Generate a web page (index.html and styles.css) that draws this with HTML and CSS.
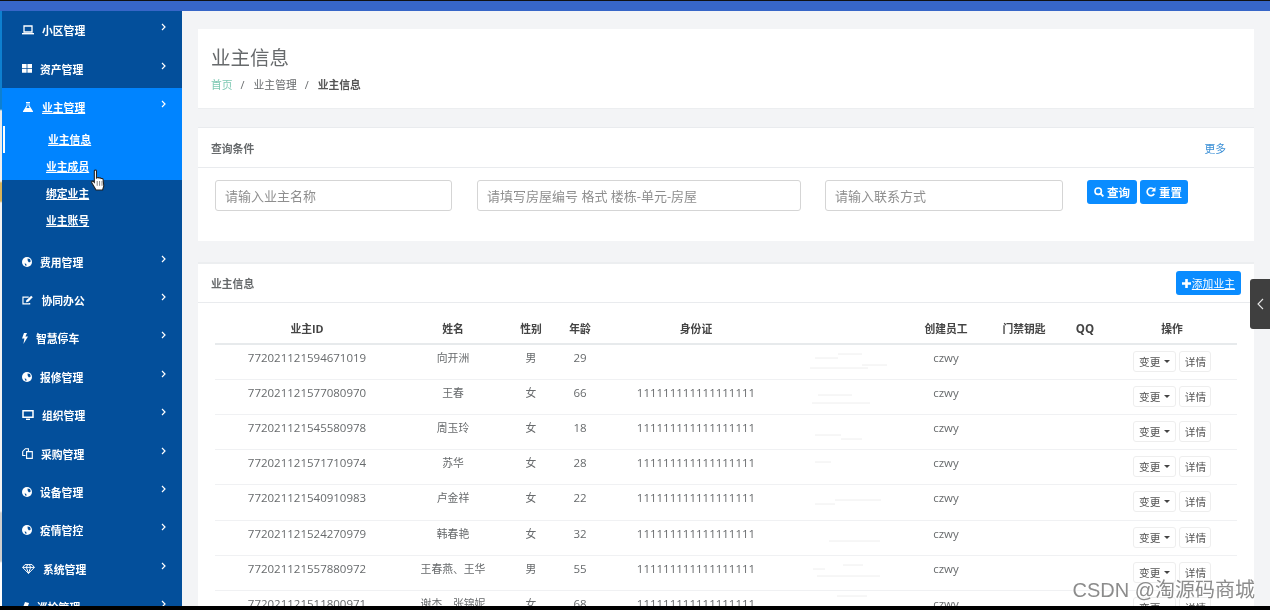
FILE: index.html
```html
<!DOCTYPE html>
<html lang="zh-CN">
<head>
<meta charset="utf-8">
<title>业主信息</title>
<link rel="stylesheet" href="styles.css">
</head>
<body>
<div class="page">
  <div class="topbar"></div>
  <div class="shell">
    <div class="edge"></div>
    <nav class="sidebar">
      <a class="item"><svg class="ic" width="12" height="10" viewBox="0 0 12 10"><path d="M2 1h8v6H2z" fill="none" stroke="#fff" stroke-width="1.3"/><path d="M0 8h12v1.4H0z" fill="#fff"/></svg><span>小区管理</span><svg class="chev" width="5" height="8" viewBox="0 0 5 8"><path d="M1 1l3 3-3 3" fill="none" stroke="#fff" stroke-width="1.2"/></svg></a>
      <a class="item"><svg class="ic" width="10" height="9" viewBox="0 0 10 9"><path d="M0 0h4.6v4H0zM5.4 0H10v4H5.4zM0 4.8h4.6v4H0zM5.4 4.8H10v4H5.4z" fill="#fff"/></svg><span>资产管理</span><svg class="chev" width="5" height="8" viewBox="0 0 5 8"><path d="M1 1l3 3-3 3" fill="none" stroke="#fff" stroke-width="1.2"/></svg></a>
      <div class="active">
        <a class="item under"><svg class="ic" width="12" height="10" viewBox="0 0 12 10"><path d="M4 0h4v1H7.4v2.6L11 9.2c.2.4 0 .8-.5.8h-9c-.5 0-.7-.4-.5-.8l3.6-5.6V1H4z" fill="#fff"/><path d="M5.5 1h1v3l1.2 2H4.3l1.2-2z" fill="#0084ff"/></svg><span>业主管理</span><svg class="chev" width="5" height="8" viewBox="0 0 5 8"><path d="M1 1l3 3-3 3" fill="none" stroke="#fff" stroke-width="1.2"/></svg></a>
        <a class="sub current">业主信息</a>
        <a class="sub">业主成员</a>
      </div>
      <div class="subrest">
        <a class="sub">绑定业主</a>
        <a class="sub">业主账号</a>
      </div>
      <a class="item"><svg class="ic" width="10" height="10" viewBox="0 0 10 10"><circle cx="5" cy="5" r="5" fill="#fff"/><path d="M5.5 1.5l2.5.6.8 2.4-1.8 1-1.2-1.5zM2.5 6.5l1.6.2.6 1.8-1.2.2z" fill="#034f9b"/></svg><span>费用管理</span><svg class="chev" width="5" height="8" viewBox="0 0 5 8"><path d="M1 1l3 3-3 3" fill="none" stroke="#fff" stroke-width="1.2"/></svg></a>
      <a class="item"><svg class="ic" width="11.5" height="10" viewBox="0 0 12 10"><path d="M8 8v1H1V2h6" fill="none" stroke="#fff" stroke-width="1.2"/><path d="M4.5 5.2L9.6.6l1.6 1.6-4.6 4.7-2.4.5z" fill="#fff"/></svg><span>协同办公</span><svg class="chev" width="5" height="8" viewBox="0 0 5 8"><path d="M1 1l3 3-3 3" fill="none" stroke="#fff" stroke-width="1.2"/></svg></a>
      <a class="item"><svg class="ic" width="6" height="11" viewBox="0 0 6 11"><path d="M2 0h3L3.4 3.6H6L1.4 11l1-5.4H0z" fill="#fff"/></svg><span>智慧停车</span><svg class="chev" width="5" height="8" viewBox="0 0 5 8"><path d="M1 1l3 3-3 3" fill="none" stroke="#fff" stroke-width="1.2"/></svg></a>
      <a class="item"><svg class="ic" width="10" height="10" viewBox="0 0 10 10"><circle cx="5" cy="5" r="5" fill="#fff"/><path d="M5.5 1.5l2.5.6.8 2.4-1.8 1-1.2-1.5zM2.5 6.5l1.6.2.6 1.8-1.2.2z" fill="#034f9b"/></svg><span>报修管理</span><svg class="chev" width="5" height="8" viewBox="0 0 5 8"><path d="M1 1l3 3-3 3" fill="none" stroke="#fff" stroke-width="1.2"/></svg></a>
      <a class="item"><svg class="ic" width="12" height="10" viewBox="0 0 12 10"><path d="M1 .8h10v6.4H1z" fill="none" stroke="#fff" stroke-width="1.5"/><path d="M4 8.6h4V10H4z" fill="#fff"/></svg><span>组织管理</span><svg class="chev" width="5" height="8" viewBox="0 0 5 8"><path d="M1 1l3 3-3 3" fill="none" stroke="#fff" stroke-width="1.2"/></svg></a>
      <a class="item"><svg class="ic" width="11" height="11" viewBox="0 0 11 11"><path d="M3.5 7.5H.7V3.4L3.4.7h3v2.5" fill="none" stroke="#fff" stroke-width="1.1"/><path d="M4.6 3.6h5.7v6.8H4.6z" fill="none" stroke="#fff" stroke-width="1.1"/></svg><span>采购管理</span><svg class="chev" width="5" height="8" viewBox="0 0 5 8"><path d="M1 1l3 3-3 3" fill="none" stroke="#fff" stroke-width="1.2"/></svg></a>
      <a class="item"><svg class="ic" width="10" height="10" viewBox="0 0 10 10"><circle cx="5" cy="5" r="5" fill="#fff"/><path d="M5.5 1.5l2.5.6.8 2.4-1.8 1-1.2-1.5zM2.5 6.5l1.6.2.6 1.8-1.2.2z" fill="#034f9b"/></svg><span>设备管理</span><svg class="chev" width="5" height="8" viewBox="0 0 5 8"><path d="M1 1l3 3-3 3" fill="none" stroke="#fff" stroke-width="1.2"/></svg></a>
      <a class="item"><svg class="ic" width="10" height="10" viewBox="0 0 10 10"><circle cx="5" cy="5" r="5" fill="#fff"/><path d="M5.5 1.5l2.5.6.8 2.4-1.8 1-1.2-1.5zM2.5 6.5l1.6.2.6 1.8-1.2.2z" fill="#034f9b"/></svg><span>疫情管控</span><svg class="chev" width="5" height="8" viewBox="0 0 5 8"><path d="M1 1l3 3-3 3" fill="none" stroke="#fff" stroke-width="1.2"/></svg></a>
      <a class="item"><svg class="ic" width="13" height="10" viewBox="0 0 13 10"><path d="M3 .6h7l2.4 2.8-5.9 6-5.9-6zM.8 3.4h11.4M4.4 3.4l2.1 6 2.1-6M4.4 3.4L5.6.6M8.6 3.4L7.4.6" fill="none" stroke="#fff" stroke-width="1"/></svg><span>系统管理</span><svg class="chev" width="5" height="8" viewBox="0 0 5 8"><path d="M1 1l3 3-3 3" fill="none" stroke="#fff" stroke-width="1.2"/></svg></a>
      <a class="item"><svg class="ic" width="7" height="10" viewBox="0 0 7 10"><path d="M3 0l4 1-3 9-4-2z" fill="#fff"/></svg><span>巡检管理</span><svg class="chev" width="5" height="8" viewBox="0 0 5 8"><path d="M1 1l3 3-3 3" fill="none" stroke="#fff" stroke-width="1.2"/></svg></a>
    </nav>
    <main class="main">
      <section class="card heading">
        <h2 class="title">业主信息</h2>
        <div class="crumbs"><span class="home">首页</span><i>/</i><span>业主管理</span><i>/</i><b>业主信息</b></div>
      </section>
      <section class="card query">
        <header class="card-head"><span class="head-title">查询条件</span><span class="more">更多</span></header>
        <div class="filters">
          <input class="field f1" placeholder="请输入业主名称">
          <input class="field f2" placeholder="请填写房屋编号 格式 楼栋-单元-房屋">
          <input class="field f3" placeholder="请输入联系方式">
          <div class="btns">
            <button class="btn"><svg width="10" height="10" viewBox="0 0 10 10"><circle cx="4.2" cy="4.2" r="3.2" fill="none" stroke="#fff" stroke-width="1.6"/><path d="M6.6 6.6L9.4 9.4" stroke="#fff" stroke-width="1.9"/></svg>查询</button>
            <button class="btn"><svg width="10" height="10" viewBox="0 0 10 10"><path d="M8.2 6.8A3.8 3.8 0 1 1 7.8 2.3" fill="none" stroke="#fff" stroke-width="1.7"/><path d="M9.5 0v4.4H5.2z" fill="#fff"/></svg>重置</button>
          </div>
        </div>
      </section>
      <section class="card list">
        <header class="card-head"><span class="head-title">业主信息</span><button class="btn add"><svg width="9" height="9" viewBox="0 0 9 9"><path d="M3.2 0h2.6v3.2H9v2.6H5.8V9H3.2V5.8H0V3.2h3.2z" fill="#fff"/></svg><span>添加业主</span></button></header>
        <table class="table">
          <thead>
            <tr><th class="c1">业主ID</th><th class="c2">姓名</th><th class="c3">性别</th><th class="c4">年龄</th><th class="c5">身份证</th><th class="c6"></th><th class="c7">创建员工</th><th class="c8">门禁钥匙</th><th class="c9">QQ</th><th class="c10">操作</th></tr>
          </thead>
          <tbody>
            <tr><td class="num">772021121594671019</td><td>向开洲</td><td>男</td><td class="num">29</td><td class="num"></td><td class="smudge"><svg width="123" height="34" viewBox="0 0 123 34"><path d="M51 9h24M28 13h23M75 20h25M23 23h58"/></svg></td><td class="num">czwy</td><td></td><td></td><td class="ops"><div class="ops-in"><button class="mini">变更<i class="caret"></i></button><button class="mini">详情</button></div></td></tr>
            <tr><td class="num">772021121577080970</td><td>王春</td><td>女</td><td class="num">66</td><td class="num">111111111111111111</td><td class="smudge"><svg width="123" height="34" viewBox="0 0 123 34"><path d="M31 15h34M25 23h58"/></svg></td><td class="num">czwy</td><td></td><td></td><td class="ops"><div class="ops-in"><button class="mini">变更<i class="caret"></i></button><button class="mini">详情</button></div></td></tr>
            <tr><td class="num">772021121545580978</td><td>周玉玲</td><td>女</td><td class="num">18</td><td class="num">111111111111111111</td><td class="smudge"><svg width="123" height="34" viewBox="0 0 123 34"><path d="M28 20h26M54 24h21"/></svg></td><td class="num">czwy</td><td></td><td></td><td class="ops"><div class="ops-in"><button class="mini">变更<i class="caret"></i></button><button class="mini">详情</button></div></td></tr>
            <tr><td class="num">772021121571710974</td><td>苏华</td><td>女</td><td class="num">28</td><td class="num">111111111111111111</td><td class="smudge"><svg width="123" height="34" viewBox="0 0 123 34"><path d="M28 12h16"/></svg></td><td class="num">czwy</td><td></td><td></td><td class="ops"><div class="ops-in"><button class="mini">变更<i class="caret"></i></button><button class="mini">详情</button></div></td></tr>
            <tr><td class="num">772021121540910983</td><td>卢金祥</td><td>女</td><td class="num">22</td><td class="num">111111111111111111</td><td class="smudge"><svg width="123" height="34" viewBox="0 0 123 34"><path d="M48 15h46M28 19h20"/></svg></td><td class="num">czwy</td><td></td><td></td><td class="ops"><div class="ops-in"><button class="mini">变更<i class="caret"></i></button><button class="mini">详情</button></div></td></tr>
            <tr><td class="num">772021121524270979</td><td>韩春艳</td><td>女</td><td class="num">32</td><td class="num">111111111111111111</td><td class="smudge"><svg width="123" height="34" viewBox="0 0 123 34"><path d="M42 20h51"/></svg></td><td class="num">czwy</td><td></td><td></td><td class="ops"><div class="ops-in"><button class="mini">变更<i class="caret"></i></button><button class="mini">详情</button></div></td></tr>
            <tr><td class="num">772021121557880972</td><td>王春燕、王华</td><td>男</td><td class="num">55</td><td class="num">111111111111111111</td><td class="smudge"><svg width="123" height="34" viewBox="0 0 123 34"><path d="M56 9h20M26 13h12M30 20h63"/></svg></td><td class="num">czwy</td><td></td><td></td><td class="ops"><div class="ops-in"><button class="mini">变更<i class="caret"></i></button><button class="mini">详情</button></div></td></tr>
            <tr><td class="num">772021121511800971</td><td>谢杰、张锦妮</td><td>女</td><td class="num">68</td><td class="num">111111111111111111</td><td class="smudge"><svg width="123" height="34" viewBox="0 0 123 34"><path d="M50 5h30"/></svg></td><td class="num">czwy</td><td></td><td></td><td class="ops"><div class="ops-in"><button class="mini">变更<i class="caret"></i></button><button class="mini">详情</button></div></td></tr>
          </tbody>
        </table>
      </section>
    </main>
  </div>
  <div class="footer"></div>
  <div class="handle"><svg width="7" height="12" viewBox="0 0 7 12"><path d="M6 1L1 6l5 5" fill="none" stroke="#e8e8e8" stroke-width="1.1"/></svg></div>
  <svg class="cursor" width="18" height="24" viewBox="0 0 15 20"><path d="M3.6 1.6c0-1 1.8-1 1.8 0v6l.5-.2c.4-.5 1.5-.4 1.7.2.5-.4 1.5-.3 1.7.4.6-.3 1.5 0 1.6.7l.6 5.4-1 3.4H5l-3.5-6c-.6-1 .5-1.8 1.3-1.1l.8.8z" fill="#fff" stroke="#222" stroke-width=".9"/><path d="M6 10v4M8 10v4M10 10v4" stroke="#555" stroke-width=".6"/></svg>
  <div class="watermark">CSDN @淘源码商城</div>
</div>
</body>
</html>
```
FILE: styles.css
```css
* { box-sizing: border-box; }
html, body { margin: 0; padding: 0; height: 100%; overflow: hidden; background: #fff; }
body { font-family: "Open Sans", "Noto Sans CJK SC", sans-serif; font-size: 10.8px; color: #676a6c; }
.page { position: relative; width: 1270px; height: 610px; display: flex; flex-direction: column; overflow: hidden; filter: blur(0.35px); }
.topbar { height: 11px; flex: none; background: #3766c8; border-top: 1px solid #111; }
.shell { flex: 1; min-height: 0; display: flex; }
.footer { height: 4px; flex: none; background: #000; }
.edge { width: 2px; flex: none; background: linear-gradient(#0e80d0 0, #0e80d0 98px, #e9e9e9 100px, #f2f2f2 170px, #d9b35a 172px, #d9b35a 190px, #f4f4f4 192px, #f4f4f4 500px, #cfcfcf 502px, #cfcfcf 550px, #fff 552px); }

.sidebar { width: 180px; flex: none; background: #034f9b; overflow: hidden; color: #fff; font-weight: 700; }
.item { height: 38.4px; display: flex; align-items: center; padding-left: 20px; gap: 8px; color: #fff; }
.ic { flex: none; }
.chev { margin-left: auto; margin-right: 16px; transform: translateY(-3px); flex: none; }
.under span { text-decoration: underline; }
.active { background: #0084ff; height: 92.7px; }
.sub { display: block; height: 27px; line-height: 27px; padding-left: 44px; color: #fff; text-decoration: underline; }
.current { margin-left: 1px; padding-left: 43px; border-left: 2px solid #fff; }
.subrest { padding-bottom: 8px; }

.main { flex: 1; min-width: 0; background: #f3f4f6; padding: 18px 16px 0; overflow: hidden; }
.card { background: #fff; }
.heading { height: 80px; padding: 16px 13px 0; margin-bottom: 18px; border-bottom: 1px solid #eceef0; }
.title { margin: 0; font-size: 19.5px; line-height: 26px; font-weight: 400; color: #676a6c; }
.crumbs { margin-top: 5px; display: flex; align-items: center; line-height: 18px; color: #676a6c; }
.crumbs i { font-style: normal; margin: 0 9px 0 8px; }
.crumbs b { color: #555; }
.home { color: #7fc9b4; }
.query { height: 114px; margin-bottom: 21px; border-top: 1px solid #e9ebee; }
.card-head { height: 40px; display: flex; align-items: center; justify-content: space-between; padding: 0 13px; border-bottom: 1px solid #e9ebee; }
.head-title { font-weight: 700; color: #676a6c; }
.more { color: #3a8fd6; margin-right: 15px; }
.filters { display: flex; align-items: flex-start; padding: 12px 0 0 17px; gap: 25px; }
.field { height: 31px; border: 1px solid #d5d5d5; border-radius: 3px; padding: 0 9px; font: 13px "Open Sans", "Noto Sans CJK SC", sans-serif; color: #555; background: #fff; outline: none; }
.field::placeholder { color: #8f8f8f; opacity: 1; }
.f1 { width: 237px; }
.f2 { width: 324px; margin-right: -1px; }
.f3 { width: 238px; }
.btns { display: flex; gap: 3px; margin-left: -1px; }
.btn { height: 24px; display: inline-flex; align-items: center; justify-content: center; gap: 3px; padding: 0 7px; border: 0; border-radius: 3px; background: #0a8cff; color: #fff; font: 700 11.5px "Open Sans", "Noto Sans CJK SC", sans-serif; }
.btn + .btn { padding: 0 6px; }
.list { height: 344px; border-top: 2px solid #eceef0; }
.list .card-head { height: 39px; padding-right: 13px; }
.add { padding: 0 6px; gap: 1px; font-weight: 400; font-size: 10.8px; }
.add span { text-decoration: underline; }

.table { width: 1022px; margin-left: 17px; border-collapse: collapse; table-layout: fixed; }
.table th { height: 41px; padding: 18px 0 0; border-bottom: 2px solid #e7eaec; color: #444; font-weight: 700; font-size: 10.8px; text-align: center; vertical-align: top; line-height: 16px; }
.table td { height: 35.15px; padding: 5px 0 0; border-bottom: 1px solid #f0f1f3; text-align: center; vertical-align: top; line-height: 16px; color: #676a6c; }
.table td.num { font-size: 11.5px; }
.table td.smudge { padding: 0; }
.smudge svg { display: block; }
.smudge path { fill: none; stroke: #eeeeee; stroke-width: 1; }
.table td.ops { padding: 6px 0 0 29px; text-align: left; }
.c1 { width: 184px; } .c2 { width: 108px; } .c3 { width: 48px; } .c4 { width: 50px; } .c5 { width: 182px; }
.c6 { width: 123px; } .c7 { width: 72px; } .c8 { width: 84px; } .c9 { width: 38px; } .c10 { width: 133px; }
.table th.c9 { font-size: 11.5px; }
.table th.c10 { padding-left: 3px; }
.ops-in { display: flex; gap: 3px; }
.mini { height: 21px; display: inline-flex; align-items: center; justify-content: center; gap: 4px; padding: 0 5px; border: 1px solid #eeeeee; border-radius: 3px; background: #fff; color: #555; font: 10.7px "Open Sans", "Noto Sans CJK SC", sans-serif; }
.mini + .mini { padding: 0 4.3px; }
.caret { width: 0; height: 0; border: 3px solid transparent; border-top-color: #444; border-bottom: 0; }

.handle { position: absolute; left: 1250px; top: 279px; width: 20px; height: 50px; background: #3f3f3f; border-radius: 3px 0 0 3px; display: flex; align-items: center; justify-content: center; }
.cursor { position: absolute; left: 90px; top: 169px; }
.watermark { position: absolute; right: 15px; top: 577px; font: 20px/26px "Liberation Sans", "Noto Sans CJK SC", sans-serif; color: #8c8c8c; text-shadow: 0 0 3px #fff, 0 0 3px #fff; }
```
